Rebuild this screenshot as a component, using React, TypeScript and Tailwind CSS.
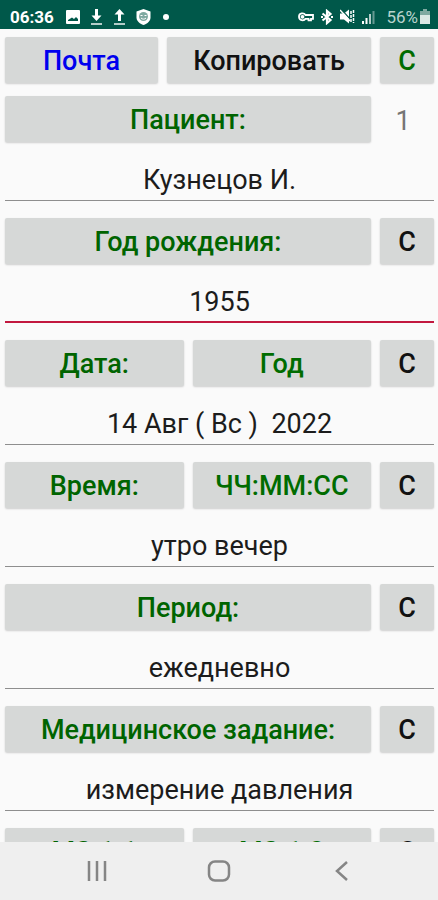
import { useState } from 'react';

interface FieldConfig {
  id: string;
  label: string;
  extra?: string;
  counter?: string;
  value: string;
  active?: boolean;
}

const FIELDS: FieldConfig[] = [
  { id: 'patient', label: 'Пациент:', counter: '1', value: 'Кузнецов И.' },
  { id: 'birth', label: 'Год рождения:', value: '1955', active: true },
  { id: 'date', label: 'Дата:', extra: 'Год', value: '14 Авг ( Вс )  2022' },
  { id: 'time', label: 'Время:', extra: 'ЧЧ:ММ:СС', value: 'утро вечер' },
  { id: 'period', label: 'Период:', value: 'ежедневно' },
  { id: 'task', label: 'Медицинское задание:', value: 'измерение давления' },
  { id: 'subtask', label: 'МЗ.1.1', extra: 'МЗ.1.2', value: '' },
];

function KeyButton({
  text,
  className,
  onClick,
}: {
  text: string;
  className: string;
  onClick?: () => void;
}) {
  return (
    <button
      type="button"
      onClick={onClick}
      className={`h-[46px] rounded-xs bg-[#d6d8d7] pt-0.5 text-[27px] leading-8 font-medium whitespace-nowrap shadow-[0_1px_2px_rgba(0,0,0,0.18)] ${className}`}
    >
      {text}
    </button>
  );
}

function StatusBar() {
  return (
    <header className="flex h-[29px] shrink-0 items-center justify-between bg-[#00584a] pt-1 pr-2 pl-2.5 text-white">
      <div className="flex items-center gap-3">
        <span className="text-[17px] leading-5 font-bold">06:36</span>
        <div className="flex items-center gap-2.5">
          <svg width="14" height="14" viewBox="0 0 14 14">
            <path
              fill="currentColor"
              fillRule="evenodd"
              d="M1 0h12a1 1 0 0 1 1 1v12a1 1 0 0 1-1 1H1a1 1 0 0 1-1-1V1a1 1 0 0 1 1-1zm1 11h10V9L10 7 8 9 6 7.500 2 10z"
            />
          </svg>
          <svg width="13" height="16" viewBox="0 0 13 16" fill="currentColor">
            <path d="M5 0h3v6.500h3.500L6.500 12l-5-5.500H5z" />
            <path d="M1 14h11v2H1z" opacity="0.7" />
          </svg>
          <svg width="13" height="16" viewBox="0 0 13 16" fill="currentColor">
            <path d="M5 12h3V5.500h3.500L6.500 0l-5 5.500H5z" />
            <path d="M1 14h11v2H1z" opacity="0.7" />
          </svg>
          <svg width="15" height="16" viewBox="0 0 15 16">
            <path
              d="M7.500 0 14.500 2.500v6c0 3.500-3 6-7 7.500C3.500 14.500.5 12 .5 8.500v-6z"
              fill="currentColor"
            />
            <circle cx="7.500" cy="7.500" r="4.500" fill="#7fa9a1" />
            <path
              d="M4.500 6.500h2M8.500 6.500h2M5 9c1.500 1.500 3.500 1.500 5 0"
              stroke="#fff"
              fill="none"
            />
          </svg>
        </div>
        <span className="size-1.5 rounded-full bg-white" />
      </div>
      <div className="flex items-center gap-[7px]">
        <svg
          width="16"
          height="10"
          viewBox="0 0 16 10"
          fill="none"
          stroke="currentColor"
          strokeWidth="1.800"
        >
          <path d="M7.500 3C6 .5 1 .8 1 4.800s5 4.500 6.500 2h3v1.500H13V6.800h2V3z" />
          <circle cx="4.500" cy="4.800" r="1" />
        </svg>
        <svg
          width="12"
          height="16"
          viewBox="0 0 12 16"
          fill="none"
          stroke="currentColor"
          strokeWidth="2.200"
        >
          <path d="M1.500 4.500 9.500 11 6 14V2l3.500 3-8 6.500" />
          <path d="M0 8h2M10 8h2" />
        </svg>
        <svg width="15" height="15" viewBox="0 0 15 15">
          <path d="M0 4.500h4l5-4v14l-5-4H0z" fill="currentColor" />
          <path
            d="M11 2v11M13.500 1v13"
            stroke="currentColor"
            strokeWidth="1.500"
            strokeDasharray="3 1"
          />
          <path d="M1 0l9 10" stroke="#00584a" strokeWidth="1.200" />
          <path d="M0 1l10 11" stroke="currentColor" strokeWidth="1.500" />
        </svg>
        <svg width="13" height="14" viewBox="0 0 13 14" fill="currentColor">
          <path d="M0 11h2v3H0zM3.500 8h2v6h-2z" />
          <path d="M7 4h2v10H7z" opacity="0.700" />
          <path d="M10.500 1h2v13h-2z" opacity="0.400" />
        </svg>
        <div className="flex items-center gap-0.5 pl-1">
          <span className="text-[17px] leading-5 text-[#b9d3cd]">56%</span>
          <svg width="10" height="15" viewBox="0 0 10 15">
            <path d="M3 0h4v2H3zM0 2h10v4H0z" fill="#7fa9a1" />
            <path d="M0 6h10v9H0z" fill="#dbe8e5" />
          </svg>
        </div>
      </div>
    </header>
  );
}

function FieldGroup({ field }: { field: FieldConfig }) {
  const [value, setValue] = useState(field.value);

  return (
    <section className="shrink-0">
      <div className="flex gap-[9px]">
        <KeyButton text={field.label} className="flex-1 text-[#006400]" />
        {field.extra && (
          <KeyButton text={field.extra} className="flex-1 text-[#006c00]" />
        )}
        {field.counter ? (
          <span className="flex w-[54px] items-center justify-center pt-1 pr-2 text-[27px] leading-8 text-[#757575]">
            {field.counter}
          </span>
        ) : (
          <KeyButton
            text="С"
            className="w-[54px] text-[#111111]"
            onClick={() => setValue('')}
          />
        )}
      </div>
      <input
        id={field.id}
        type="text"
        aria-label={field.label}
        value={value}
        onChange={(e) => setValue(e.target.value)}
        className={`mt-4 mb-[17px] block h-[43px] w-full bg-transparent pt-0.5 text-center text-[27px] leading-8 text-[#1c1c1c] outline-none ${
          field.active
            ? 'border-b-2 border-[#c2183f]'
            : 'border-b border-[#8e8e8e]'
        }`}
      />
    </section>
  );
}

function NavigationBar() {
  return (
    <nav className="flex h-[58px] shrink-0 items-center justify-around bg-[#efefef] px-9 text-[#858585]">
      <button type="button" aria-label="Недавние">
        <svg width="24" height="24" viewBox="0 0 24 24">
          <path
            d="M4 2v20M12 2v20M20 2v20"
            stroke="currentColor"
            strokeWidth="2.500"
          />
        </svg>
      </button>
      <button type="button" aria-label="Домой">
        <svg width="24" height="24" viewBox="0 0 24 24">
          <rect
            x="2"
            y="2.500"
            width="20"
            height="19"
            rx="6"
            fill="none"
            stroke="currentColor"
            strokeWidth="2.500"
          />
        </svg>
      </button>
      <button type="button" aria-label="Назад">
        <svg width="24" height="24" viewBox="0 0 24 24">
          <path
            d="M18 3 8 12l10 9"
            fill="none"
            stroke="currentColor"
            strokeWidth="2.500"
          />
        </svg>
      </button>
    </nav>
  );
}

export default function App() {
  return (
    <div className="flex h-screen flex-col bg-[#fafafa] font-[Roboto,sans-serif]">
      <StatusBar />
      <main className="flex min-h-0 flex-1 flex-col overflow-hidden pt-2 pr-1 pl-[5px]">
        <div className="mb-[13px] flex shrink-0 gap-[9px]">
          <KeyButton text="Почта" className="flex-3 text-[#0000ee]" />
          <KeyButton text="Копировать" className="flex-4 text-[#111111]" />
          <KeyButton text="С" className="w-[54px] text-[#006c00]" />
        </div>
        {FIELDS.map((field) => (
          <FieldGroup key={field.id} field={field} />
        ))}
      </main>
      <NavigationBar />
    </div>
  );
}
